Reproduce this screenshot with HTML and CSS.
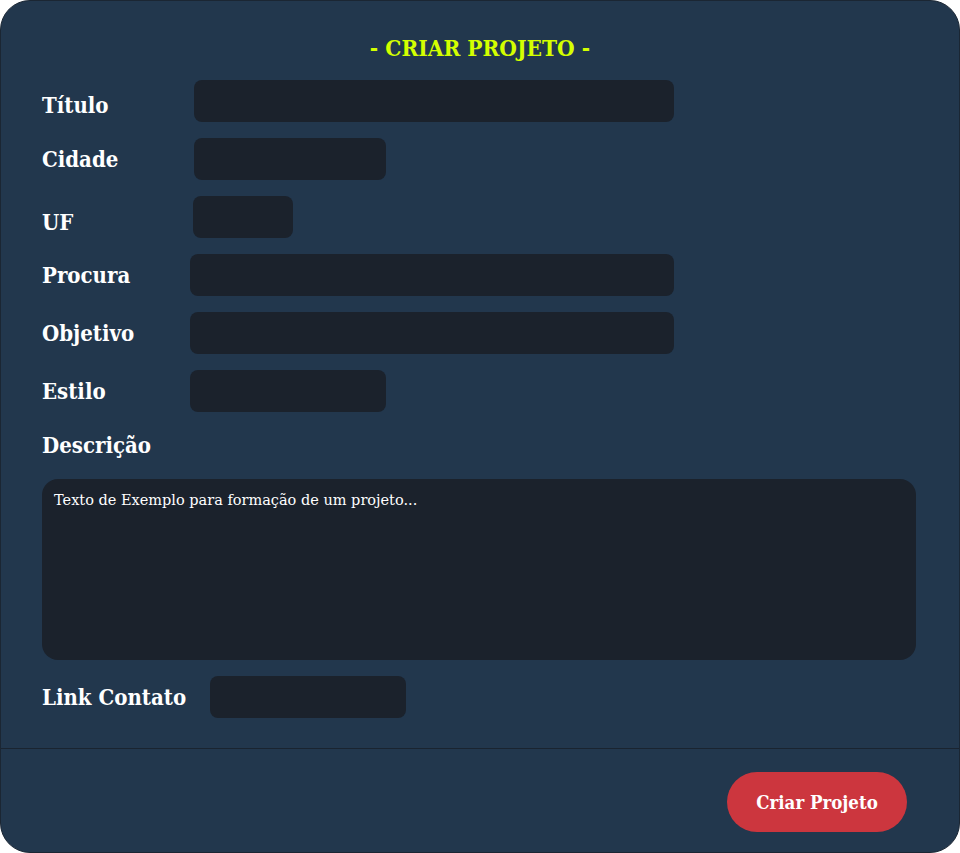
FILE: index.html
```html
<!DOCTYPE html>
<html lang="pt-BR">
<head>
<meta charset="utf-8">
<title>Criar Projeto</title>
<link rel="stylesheet" href="styles.css">
</head>
<body>
<div class="modal">
  <div class="modal-body">
    <h1 class="title">- CRIAR PROJETO -</h1>
    <div class="row row-titulo">
      <label class="label lw-152">Título</label>
      <div class="field fw-480"></div>
    </div>
    <div class="row">
      <label class="label lw-152">Cidade</label>
      <div class="field fw-192"></div>
    </div>
    <div class="row row-uf">
      <label class="label lw-151">UF</label>
      <div class="field fw-100"></div>
    </div>
    <div class="row">
      <label class="label lw-148">Procura</label>
      <div class="field fw-484"></div>
    </div>
    <div class="row">
      <label class="label lw-148">Objetivo</label>
      <div class="field fw-484"></div>
    </div>
    <div class="row">
      <label class="label lw-148">Estilo</label>
      <div class="field fw-196"></div>
    </div>
    <div class="desc-label">Descrição</div>
    <div class="textarea">Texto de Exemplo para formação de um projeto...</div>
    <div class="row row-link">
      <label class="label lw-168">Link Contato</label>
      <div class="field fw-196"></div>
    </div>
  </div>
  <div class="modal-footer">
    <button class="btn">Criar Projeto</button>
  </div>
</div>
</body>
</html>
```
FILE: styles.css
```css
* { box-sizing: border-box; }
html, body { margin: 0; padding: 0; background: #ffffff; }
body {
  font-family: "DejaVu Serif Condensed", "DejaVu Serif", serif;
  color: #ffffff;
}
.modal {
  width: 960px;
  height: 853px;
  background: #22374d;
  border: 1px solid #1b2633;
  border-radius: 30px;
  display: flex;
  flex-direction: column;
  overflow: hidden;
}
.modal-body {
  height: 748px;
  border-bottom: 1px solid #1a2430;
  padding: 34px 0 0 41px;
}
.title {
  margin: 0 0 19px 0;
  text-align: center;
  font-size: 22.5px;
  line-height: 26px;
  font-weight: bold;
  color: #d4ff00;
  padding-right: 41px;
}
.row {
  display: flex;
  align-items: center;
  height: 42px;
  margin-bottom: 16px;
}
.label {
  font-size: 22px;
  font-weight: bold;
  line-height: 26px;
  flex: none;
}
.row-titulo .label { padding-top: 8px; }
.row-uf .label { padding-top: 10px; }
.lw-152 { width: 152px; }
.lw-151 { width: 151px; }
.lw-148 { width: 148px; }
.lw-168 { width: 168px; }
.field {
  height: 42px;
  background: #1b222c;
  border-radius: 8px;
}
.fw-480 { width: 480px; }
.fw-192 { width: 192px; }
.fw-100 { width: 100px; }
.fw-484 { width: 484px; }
.fw-196 { width: 196px; }
.desc-label {
  font-size: 22px;
  font-weight: bold;
  line-height: 26px;
  margin-top: 20px;
}
.textarea {
  margin-top: 21px;
  width: 874px;
  height: 181px;
  background: #1b222c;
  border-radius: 16px;
  padding: 11px 12px;
  font-family: "DejaVu Serif", serif;
  font-size: 14.5px;
  line-height: 20px;
}
.row-link { margin-top: 16px; }
.modal-footer {
  flex: 1;
  display: flex;
  justify-content: flex-end;
  align-items: flex-start;
  padding: 23px 52px 0 0;
}
.btn {
  width: 180px;
  height: 60px;
  border: none;
  border-radius: 30px;
  background: #cc363e;
  color: #ffffff;
  font-family: "DejaVu Serif Condensed", "DejaVu Serif", serif;
  font-size: 18.5px;
  font-weight: bold;
}
```
